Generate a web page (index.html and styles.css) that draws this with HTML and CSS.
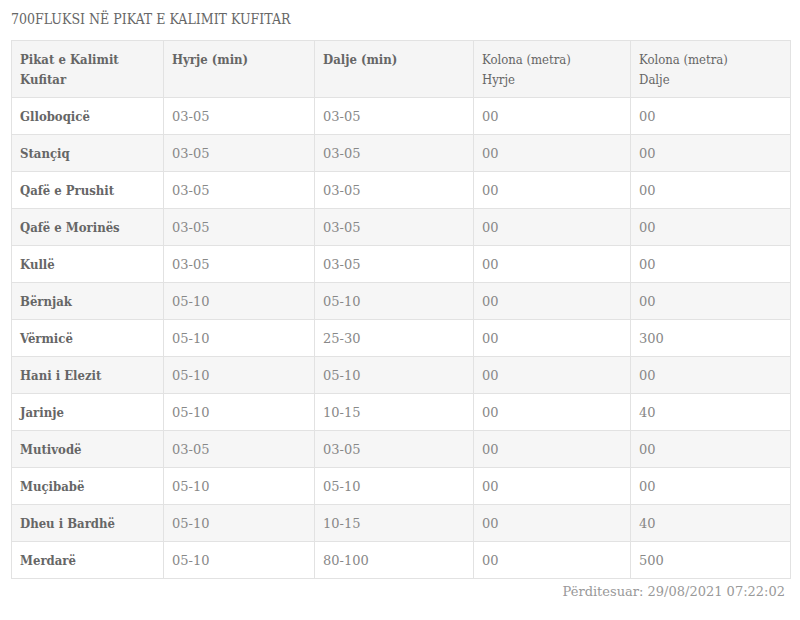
FILE: index.html
```html
<!DOCTYPE html>
<html>
<head>
<meta charset="utf-8">
<link rel="stylesheet" href="styles.css">
</head>
<body>
<div class="page">
  <h2 class="title">700FLUKSI NË PIKAT E KALIMIT KUFITAR</h2>
  <table class="flux">
    <colgroup>
      <col class="c1"><col class="c2"><col class="c3"><col class="c4"><col class="c5">
    </colgroup>
    <thead>
      <tr><th>Pikat e Kalimit<br>Kufitar</th><th>Hyrje (min)</th><th>Dalje (min)</th><th>Kolona (metra)<br>Hyrje</th><th>Kolona (metra)<br>Dalje</th></tr>
    </thead>
    <tbody>
      <tr><th>Glloboqicë</th><td>03-05</td><td>03-05</td><td>00</td><td>00</td></tr>
      <tr><th>Stançiq</th><td>03-05</td><td>03-05</td><td>00</td><td>00</td></tr>
      <tr><th>Qafë e Prushit</th><td>03-05</td><td>03-05</td><td>00</td><td>00</td></tr>
      <tr><th>Qafë e Morinës</th><td>03-05</td><td>03-05</td><td>00</td><td>00</td></tr>
      <tr><th>Kullë</th><td>03-05</td><td>03-05</td><td>00</td><td>00</td></tr>
      <tr><th>Bërnjak</th><td>05-10</td><td>05-10</td><td>00</td><td>00</td></tr>
      <tr><th>Vërmicë</th><td>05-10</td><td>25-30</td><td>00</td><td>300</td></tr>
      <tr><th>Hani i Elezit</th><td>05-10</td><td>05-10</td><td>00</td><td>00</td></tr>
      <tr><th>Jarinje</th><td>05-10</td><td>10-15</td><td>00</td><td>40</td></tr>
      <tr><th>Mutivodë</th><td>03-05</td><td>03-05</td><td>00</td><td>00</td></tr>
      <tr><th>Muçibabë</th><td>05-10</td><td>05-10</td><td>00</td><td>00</td></tr>
      <tr><th>Dheu i Bardhë</th><td>05-10</td><td>10-15</td><td>00</td><td>40</td></tr>
      <tr><th>Merdarë</th><td>05-10</td><td>80-100</td><td>00</td><td>500</td></tr>
    </tbody>
  </table>
  <p class="updated">Përditesuar: 29/08/2021 07:22:02</p>
</div>
</body>
</html>
```
FILE: styles.css
```css
html, body { margin: 0; padding: 0; background: #fff; }
body { font-family: "DejaVu Serif Condensed", "DejaVu Serif", serif; color: #777; }
.page { padding: 10px 10px 0 11px; }
.title {
  margin: 0 0 11px 0;
  font-size: 14px;
  font-weight: normal;
  line-height: 19px;
  color: #666;
}
.flux {
  width: 779px;
  border-collapse: collapse;
  table-layout: fixed;
  border: 1px solid #dcdcdc;
  font-size: 13px;
}
.c1 { width: 152px; }
.c2 { width: 151px; }
.c3 { width: 159px; }
.c4 { width: 157px; }
.c5 { width: 160px; }
.flux th, .flux td {
  border: 1px solid #e2e2e2;
  padding: 9px 8px 7px 8px;
  line-height: 20px;
  text-align: left;
  vertical-align: top;
}
.flux thead th { background: #f5f5f5; color: #666; font-weight: bold; }
.flux thead th:nth-child(n+4) { font-weight: normal; color: #666; }
.flux tbody th { font-weight: bold; color: #666; }
.flux tbody td {
  font-family: "DejaVu Serif", serif;
  color: #888;
  font-weight: normal;
}
.flux tbody tr:nth-child(even) { background: #f6f6f6; }
.updated {
  width: 774px;
  margin: 4px 0 0 0;
  text-align: right;
  font-family: "DejaVu Serif", serif;
  font-size: 13px;
  line-height: 18px;
  color: #999;
}
```
